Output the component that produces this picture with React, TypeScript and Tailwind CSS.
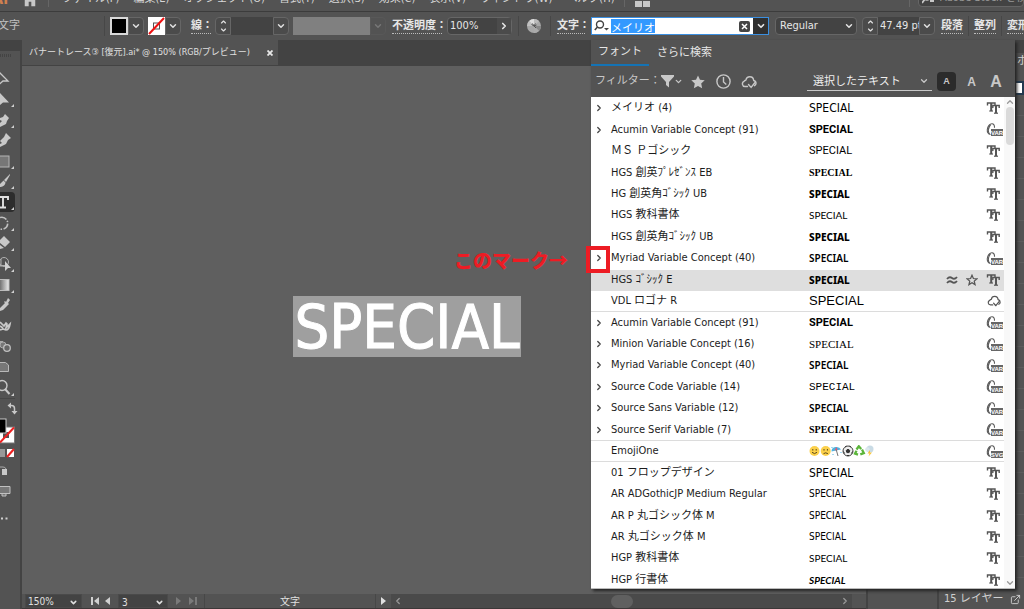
import React from "react";
import clsx from "clsx";
import { ChevronDown, ChevronLeft, ChevronRight, ChevronUp, ExternalLink } from "lucide-react";

type FontKind = "tt" | "var" | "svg" | "cloud";

interface FontRow {
    name: string;
    kind: FontKind;
    sample: string;
    expand?: boolean;
    selected?: boolean;
    line?: boolean;
    emoji?: boolean;
}

const condensed = "font-['DejaVu_Sans_Condensed','Noto_Sans_CJK_JP',sans-serif]";
const sans = "font-['Liberation_Sans',sans-serif]";
const noto = "font-['Noto_Sans','Noto_Sans_CJK_JP',sans-serif]";
const roboto = "font-['Roboto',sans-serif]";
const lato = "font-['Lato',sans-serif]";
const serif = "font-['Liberation_Serif',serif]";

const fonts: FontRow[] = [
    { name: "メイリオ (4)", kind: "tt", sample: clsx("text-[12px]", condensed), expand: true },
    { name: "Acumin Variable Concept (91)", kind: "var", sample: clsx("text-[11px] font-bold", roboto), expand: true },
    { name: "ＭＳ Ｐゴシック", kind: "tt", sample: clsx("text-[11px]", roboto) },
    { name: "HGS 創英ﾌﾟﾚｾﾞﾝｽ EB", kind: "tt", sample: clsx("text-[10px] font-bold", serif) },
    { name: "HG 創英角ｺﾞｼｯｸ UB", kind: "tt", sample: clsx("text-[10px] font-extrabold", noto) },
    { name: "HGS 教科書体", kind: "tt", sample: clsx("text-[10px]", lato) },
    { name: "HGS 創英角ｺﾞｼｯｸ UB", kind: "tt", sample: clsx("text-[10px] font-extrabold", noto) },
    { name: "Myriad Variable Concept (40)", kind: "var", sample: clsx("text-[10px] font-semibold", noto), expand: true },
    { name: "HGS ｺﾞｼｯｸ E", kind: "tt", sample: clsx("text-[10px] font-extrabold", noto), selected: true },
    { name: "VDL ロゴナ R", kind: "cloud", sample: clsx("text-[13px]", sans), line: true },
    { name: "Acumin Variable Concept (91)", kind: "var", sample: clsx("text-[11px] font-bold", roboto), expand: true },
    { name: "Minion Variable Concept (16)", kind: "var", sample: clsx("text-[11px]", serif), expand: true },
    { name: "Myriad Variable Concept (40)", kind: "var", sample: clsx("text-[10px] font-semibold", noto), expand: true },
    { name: "Source Code Variable (14)", kind: "var", sample: "text-[11px] font-['Liberation_Mono',monospace]", expand: true },
    { name: "Source Sans Variable (12)", kind: "var", sample: clsx("text-[10px] font-semibold", noto), expand: true },
    { name: "Source Serif Variable (7)", kind: "var", sample: clsx("text-[10px] font-bold", serif), expand: true, line: true },
    { name: "EmojiOne", kind: "svg", sample: "", emoji: true, line: true },
    { name: "01 フロップデザイン", kind: "tt", sample: clsx("text-[12px]", condensed) },
    { name: "AR ADGothicJP Medium Regular", kind: "tt", sample: clsx("text-[10px]", condensed) },
    { name: "AR P 丸ゴシック体 M", kind: "tt", sample: clsx("text-[10px]", condensed) },
    { name: "AR 丸ゴシック体 M", kind: "tt", sample: clsx("text-[10px]", condensed) },
    { name: "HGP 教科書体", kind: "tt", sample: clsx("text-[10px]", lato) },
    { name: "HGP 行書体", kind: "tt", sample: clsx("text-[10px] font-bold italic", lato) },
];

const menus = ["ファイル(F)", "編集(E)", "オブジェクト(O)", "書式(T)", "選択(S)", "効果(C)", "表示(V)", "ウィンドウ(W)", "ヘルプ(H)"];

function CloudIcon({ size }: { size: number }) {
    return (
        <svg width={size} height={size} viewBox="0 0 16 16" fill="none" stroke="currentColor" strokeWidth="1.4" strokeLinejoin="round" strokeLinecap="round">
            <path d="M6.5 12.5H4a2.7 2.7 0 0 1-.9-5.2C3.600 6.200 4.600 6.300 4.900 6.200 5.300 3.900 7 2.800 8.800 2.800c2.200 0 3.700 1.600 3.900 3.700 1.500.4 2.300 1.500 2.300 2.800 0 1-.6 1.900-1.500 2.400" />
            <path d="M7.500 10.500l2.600 2.900 3.700-4.700" />
        </svg>
    );
}

function KindIcon({ kind }: { kind: FontKind }) {
    if (kind === "cloud") return <CloudIcon size={14} />;
    if (kind === "tt") {
        return (
            <svg width="16" height="14" viewBox="0 0 16 14" fill="none" stroke="#555">
                <path d="M1.500 4.500V2h7.500v2.500" strokeWidth="1.400" />
                <path d="M5.200 2v8" strokeWidth="2" />
                <path d="M3.300 10h3.700" strokeWidth="1.200" />
                <path d="M6.800 7V4.500h6.400V7" strokeWidth="1.400" />
                <path d="M10 4.500v7.500" strokeWidth="2" />
                <path d="M8 12.200h4" strokeWidth="1.200" />
            </svg>
        );
    }
    return (
        <svg width="17" height="15" viewBox="0 0 17 15">
            <path d="M4.500 12.500C2.500 12.300 1 10.500 1.300 7.500 1.600 4.300 3.800 1.600 6 1.700c1.700.1 2.600 1.900 2.500 4.100" fill="none" stroke="#5a5a5a" strokeWidth="1.100" />
            <path d="M3.400 12C2 10 2 6 4.500 2.500" fill="none" stroke="#5a5a5a" strokeWidth="1.300" />
            <rect x="5" y="7" width="12" height="7" fill="#666" />
            <text x="11" y="13" textAnchor="middle" fontSize="6" fontWeight="bold" fill="#fff" fontFamily="Liberation Sans, sans-serif">
                {kind === "var" ? "VAR" : "SVG"}
            </text>
        </svg>
    );
}

function EmojiSample() {
    return (
        <svg width="66" height="12" viewBox="0 0 66 12">
            <circle cx="5.500" cy="6" r="5" fill="#fbd04b" />
            <path d="M3.800 4v1.600M7.200 4v1.600M3 7.300q2.500 2.600 5 0" stroke="#5c4a1c" fill="none" />
            <circle cx="16.700" cy="6" r="5" fill="#fbd04b" />
            <path d="M15 4v1.600M18.400 4v1.600M14.500 8.700q2.200-1.800 4.400 0" stroke="#5c4a1c" fill="none" />
            <path d="M22.500 6.500a5 4.500 0 0 1 9.500-2z" fill="#4fb3e0" />
            <path d="M25.500 5.500l2-3.500 1 3z" fill="#e05a70" />
            <path d="M27.300 5l1.700 6" stroke="#777" />
            <path d="M23 2v1M32 7v1M24 9v1" stroke="#4fb3e0" />
            <circle cx="39" cy="6" r="5" fill="#eee" stroke="#444" />
            <path d="M39 4.200l1.800 1.300-.7 2.100h-2.200l-.7-2.100zM36 2l1.500-.8M40.500 1.200l1.500.8M34.500 6.500l1 2M43.500 6.500l-1 2M38 10.500h2" fill="#333" stroke="#333" />
            <path d="M47.500 4.500l2.300-3.200 2.400 2.700M53 4.500l1.800 3.500-3.500 1.300M49 9.700l-3-1 1.500-3" fill="none" stroke="#5bb53a" strokeWidth="2.300" />
            <circle cx="61" cy="4" r="3.500" fill="#c9dbe5" />
            <circle cx="58.500" cy="4.500" r="2.300" fill="#dce8ee" />
            <path d="M61 5l-2.500 3.500h2L59.500 11.500 63 7.500h-2z" fill="#f7c53c" />
        </svg>
    );
}

function FontItem({ font }: { font: FontRow }) {
    return (
        <li
            className={clsx(
                "flex min-h-0 flex-1 items-center border-b pr-px",
                font.line ? "border-[#dcdcdc]" : "border-transparent",
                font.selected && "bg-[#dedede]"
            )}
        >
            <span className="flex w-[20px] pl-[3px]">
                {font.expand && (
                    <button type="button" aria-label={`${font.name} を展開`}>
                        <ChevronRight size={10} strokeWidth={3} color="#444" />
                    </button>
                )}
            </span>
            <span className="w-[198px] whitespace-nowrap text-[11px] leading-4 text-[#1c1c1c]">{font.name}</span>
            <span className={clsx("flex-1 leading-4 text-black", font.sample)}>{font.emoji ? <EmojiSample /> : "SPECIAL"}</span>
            {font.selected && (
                <span className="flex items-center gap-2 pr-2 text-[#555]">
                    <svg width="12" height="10" viewBox="0 0 12 10" fill="none" stroke="currentColor" strokeWidth="1.800">
                        <path d="M1 4Q3.500 1 6 3t5-1M1 8Q3.500 5 6 7t5-1" />
                    </svg>
                    <svg width="12" height="12" viewBox="0 0 24 24" fill="none" stroke="currentColor" strokeWidth="2.500">
                        <path d="M12 2.500l2.800 6.500 7 .6-5.300 4.700 1.600 7L12 17.500l-6.100 3.800 1.600-7L2.200 9.600l7-.6z" />
                    </svg>
                </span>
            )}
            <span className={clsx("flex w-[17px] text-[#555]", font.kind === "cloud" && "pl-px")}>
                <KindIcon kind={font.kind} />
            </span>
        </li>
    );
}

function FontMenu() {
    return (
        <div className="absolute left-0 top-full z-20 mt-[5px] w-[424px] border-b border-[#bbb] bg-[#535353] shadow-[2px_2px_3px_#222]">
            <div className="flex h-[26px] text-[11px] text-[#e6e6e6]">
                <button type="button" className="w-[58px] border-b-2 border-[#1473b5]">フォント</button>
                <button type="button" className="ml-2">さらに検索</button>
            </div>
            <div className="flex h-[31px] items-center pl-[4px] pr-[10px] text-[#c8c8c8]">
                <span className="w-[66px] whitespace-nowrap text-[11px]">フィルター：</span>
                <button type="button" aria-label="分類" className="flex w-[30px] items-center">
                    <svg width="13" height="13" viewBox="0 0 13 13" fill="currentColor"><path d="M0 0h13v1.500L8 7v5.500L5 10V7L0 1.500z" /></svg>
                    <ChevronDown size={9} strokeWidth={3.5} />
                </button>
                <button type="button" aria-label="お気に入り" className="w-[25px]">
                    <svg width="14" height="14" viewBox="0 0 24 24" fill="currentColor"><path d="M12 .8l3.400 7.500 8.100.9-6 5.500 1.600 8.100-7.100-4-7.100 4 1.600-8.100-6-5.500 8.100-.9z" /></svg>
                </button>
                <button type="button" aria-label="最近使用" className="w-[25px]">
                    <svg width="15" height="15" viewBox="0 0 15 15" fill="none" stroke="currentColor" strokeWidth="1.400"><circle cx="7.500" cy="7.500" r="6.600" /><path d="M7.500 3v5l2.800 2.500" /></svg>
                </button>
                <button type="button" aria-label="アクティベート済み"><CloudIcon size={16} /></button>
                <label className="relative ml-auto flex w-[125px] items-center border-b border-[#c8c8c8]">
                    <select aria-label="サンプルテキスト" className="w-full appearance-none pl-[6px] text-[11px] leading-[17px] text-[#f0f0f0] outline-none">
                        <option>選択したテキスト</option>
                    </select>
                    <ChevronDown size={10} strokeWidth={3} className="absolute right-[3px]" />
                </label>
                <div className="ml-[5px] flex items-center font-['Liberation_Sans',sans-serif] font-bold">
                    <button type="button" className="h-[19px] w-[19px] rounded-sm bg-[#2b2b2b] text-[9px]">A</button>
                    <button type="button" className="w-[31px] text-[12px]">A</button>
                    <button type="button" className="w-[18px] text-[16px]">A</button>
                </div>
            </div>
            <div className="flex h-[491px] overflow-hidden bg-white">
                <ul className="flex h-[494px] min-w-0 flex-1 flex-col pt-px">
                    {fonts.map((f, i) => <FontItem key={i} font={f} />)}
                </ul>
                <div className="flex w-[11px] flex-col items-center bg-[#f8f8f8] text-[#999]">
                    <ChevronUp size={10} strokeWidth={3} />
                    <div className="h-[38px] w-[8px] rounded-sm bg-[#dadada]" />
                    <ChevronDown size={10} strokeWidth={3} className="mt-auto" />
                </div>
            </div>
            <span className="pointer-events-none absolute -left-[5px] top-[206px] h-[27px] w-6 border-4 border-[#ed1c24]" />
        </div>
    );
}

function Drop({ dim }: { dim?: boolean }) {
    return (
        <button type="button" aria-label="開く" className={clsx("flex h-[18px] w-[16px] shrink-0 items-center justify-center rounded-r-sm border", dim ? "border-[#585858] text-[#777]" : "border-[#666] bg-[#4b4b4b] text-[#e0e0e0]")}>
            <ChevronDown size={10} strokeWidth={3.5} />
        </button>
    );
}

function Stepper({ label }: { label: string }) {
    return (
        <button type="button" aria-label={label} className="flex h-[18px] w-[16px] shrink-0 flex-col items-center justify-center rounded-l-sm border border-[#666] bg-[#4b4b4b] text-[#e0e0e0]">
            <ChevronUp size={9} strokeWidth={3.5} />
            <ChevronDown size={9} strokeWidth={3.5} />
        </button>
    );
}

const linkLabel = "shrink-0 whitespace-nowrap border-b border-dotted border-[#bbb] text-[11px] font-bold leading-[14px] text-[#e6e6e6]";

function ControlBar() {
    return (
        <div className="flex h-[29px] shrink-0 items-center border-t border-[#3c3c3c] bg-[#535353] text-[11px] text-[#e6e6e6]">
            <span className="-ml-[2px] w-[106px] shrink-0 text-[#c0c0c0]">文字</span>
            <span className="mr-[5px] h-5 w-px shrink-0 bg-[#474747]" />
            <button type="button" aria-label="塗り" className="h-[18px] w-[18px] shrink-0 border-2 border-[#d8d8d8] bg-black" />
            <Drop />
            <button type="button" aria-label="線の色" className="ml-[4px] shrink-0">
                <svg width="17" height="18" viewBox="0 0 17 18">
                    <rect width="17" height="18" fill="#fff" />
                    <rect x="5.500" y="6" width="6" height="6" fill="none" stroke="#555" />
                    <path d="M1 17L16 1" stroke="#ee1111" strokeWidth="2" />
                </svg>
            </button>
            <Drop />
            <label htmlFor="stroke" className={clsx(linkLabel, "ml-[10px] w-[20px]")}>線：</label>
            <div className="ml-[4px] flex shrink-0">
                <Stepper label="線幅" />
                <input id="stroke" className="w-[42px] bg-[#434343] outline-none" />
                <Drop />
            </div>
            <div className="ml-[4px] h-[18px] w-[77px] shrink-0 bg-[#808080]" />
            <Drop dim />
            <label htmlFor="opacity" className={clsx(linkLabel, "ml-[6px] w-[50px]")}>不透明度：</label>
            <div className="ml-[5px] flex h-[18px] w-[65px] shrink-0 rounded-sm border border-[#666] bg-[#434343]">
                <input id="opacity" defaultValue="100%" className="w-[49px] pl-[2px] pt-px outline-none" />
                <button type="button" aria-label="不透明度を開く" className="flex w-[15px] items-center justify-center bg-[#4b4b4b]"><ChevronRight size={10} strokeWidth={4} /></button>
            </div>
            <span className="ml-[6px] h-5 w-px shrink-0 bg-[#474747]" />
            <button type="button" aria-label="オブジェクトを再配色" className="ml-[8px] shrink-0">
                <svg width="14" height="14" viewBox="0 0 14 14">
                    <circle cx="7" cy="7" r="7" fill="#a8a8a8" />
                    <path d="M7 7L2 2A7 7 0 0 1 7 0z" fill="#ddd" />
                    <path d="M7 7V0a7 7 0 0 1 5 2z" fill="#bbb" />
                    <path d="M7 7l7 0a7 7 0 0 1-2 5z" fill="#888" />
                    <path d="M7 7l5 5a7 7 0 0 1-5 2z" fill="#aaa" />
                    <path d="M7 7H0a7 7 0 0 1 2-5z" fill="#c0c0c0" />
                    <path d="M4.500 5.500L7 7 5.500 4.500M8.500 4.500L7 7l2.500-1M7 7l2 2" stroke="#555" fill="none" />
                </svg>
            </button>
            <span className="ml-[9px] h-5 w-px shrink-0 bg-[#474747]" />
            <label htmlFor="font" className={clsx(linkLabel, "ml-[6px] w-[28px]")}>文字：</label>
            <div className="relative ml-[6px] shrink-0">
                <div className="flex h-[18px] w-[178px] items-center border border-[#3b8fe0] bg-white">
                    <svg width="15" height="12" viewBox="0 0 15 12" className="ml-[2px] shrink-0" fill="none" stroke="#444">
                        <circle cx="6" cy="4.500" r="3.500" strokeWidth="1.400" />
                        <path d="M3.500 7L.8 10" strokeWidth="1.600" />
                        <path d="M10 8h5l-2.500 2.500z" fill="#444" stroke="none" />
                    </svg>
                    <div className="ml-[2px] flex min-w-0 flex-1">
                        <input id="font" defaultValue="メイリオ" className="h-[14px] w-[44px] bg-[#3399ff] pt-px text-[11px] leading-none text-white outline-none" />
                    </div>
                    <button type="button" aria-label="クリア" className="mr-[3px] flex h-[11px] w-[11px] items-center justify-center rounded-xs bg-[#444]">
                        <svg width="7" height="7" viewBox="0 0 7 7" stroke="#fff" strokeWidth="1.500"><path d="M1 1l5 5M6 1L1 6" /></svg>
                    </button>
                    <button type="button" aria-label="フォント一覧" className="flex h-full w-[15px] items-center justify-center bg-[#303030]"><ChevronDown size={10} strokeWidth={4} /></button>
                </div>
                <FontMenu />
            </div>
            <div className="relative ml-[6px] flex h-[18px] w-[82px] shrink-0 items-center rounded-sm border border-[#666] bg-[#434343]">
                <select aria-label="フォントスタイル" className="w-full appearance-none pl-[4px] pt-px outline-none"><option>Regular</option></select>
                <ChevronDown size={10} strokeWidth={3.5} className="absolute right-[2px]" />
            </div>
            <div className="ml-[5px] flex shrink-0">
                <Stepper label="サイズ" />
                <input aria-label="フォントサイズ" defaultValue="47.49 pt" className="w-[41px] bg-[#434343] pl-[2px] pt-px outline-none" />
                <Drop />
            </div>
            <a href="#" className={clsx(linkLabel, "ml-[6px]")}>段落</a>
            <span className="mx-[5px] h-5 w-px shrink-0 bg-[#474747]" />
            <a href="#" className={linkLabel}>整列</a>
            <span className="mx-[5px] h-5 w-px shrink-0 bg-[#474747]" />
            <a href="#" className={linkLabel}>変形</a>
        </div>
    );
}

// left half of every tool is outside of the window, so only x >= 0 is drawn
const tools: { name: string; icon: React.ReactNode; sub?: boolean; active?: boolean }[] = [
    { name: "選択", icon: <path d="M-1 4L8 13H3L-1 16.500z" fill="none" stroke="#c8c8c8" strokeWidth="1.300" /> },
    { name: "ダイレクト選択", icon: <path d="M0 4L9 13.500H3L0 16z" fill="#c8c8c8" />, sub: true },
    { name: "ペン", icon: <path d="M0 8l3-1 2-3 4 4-2 3-1 3-6 3v-4l2-2-2-1z" fill="#c8c8c8" />, sub: true },
    { name: "曲線", icon: <path d="M0 11l4-4 2-4 5 5-3 2-2 4-6 3v-3l2-1z" fill="#c8c8c8" /> },
    { name: "長方形", icon: <rect x="-4" y="5" width="13" height="11" fill="#777" stroke="#b5b5b5" />, sub: true },
    { name: "ブラシ", icon: <path d="M10 3L4 9l2 2 4-7zM3.500 9.500l2 2C5 15 2 16 0 16v-3z" fill="#c8c8c8" />, sub: true },
    { name: "文字", icon: <path d="M-3 7V5H8v3M3 5v10M0 15.500h6" fill="none" stroke="#e0e0e0" strokeWidth="1.900" />, sub: true, active: true },
    { name: "回転", icon: <path d="M0 4.500a6 6 0 1 1 0 11.500" fill="none" stroke="#c0c0c0" strokeWidth="1.600" strokeDasharray="7 1.500 1.500 1.500" />, sub: true },
    { name: "消しゴム", icon: <path d="M0 7l4-4 6 6-5 5-5-4zM0 12l4 3-4 1z" fill="#c8c8c8" />, sub: true },
    { name: "シェイプ形成", icon: <><circle cx="4" cy="8" r="4.500" fill="none" stroke="#b0b0b0" /><path d="M0 11.500h6M1 5v8" stroke="#b0b0b0" /><path d="M5 7l6 7H8l-3 3z" fill="#d0d0d0" /></>, sub: true },
    { name: "グラデーション", icon: <><defs><linearGradient id="gr"><stop offset="0" stopColor="#666" /><stop offset="1" stopColor="#eee" /></linearGradient></defs><rect x="-1" y="4.500" width="10" height="11" fill="url(#gr)" stroke="#bbb" /></>, sub: true },
    { name: "スポイト", icon: <path d="M8 3l2 2-2 3 1 1-1 1-5 5-3 1v-3l5-5-1-1 1-1 1 1z" fill="#c8c8c8" /> },
    { name: "ワープ", icon: <path d="M0 6l4 4 2-3 1 1-1 4 4-4q-1 6-4 6l-3-1-3 1M0 10l3 2" fill="none" stroke="#c8c8c8" strokeWidth="1.700" /> },
    { name: "ブレンド", icon: <><rect x="-2" y="5" width="5" height="5" fill="#aaa" /><circle cx="3" cy="9" r="3" fill="#777" stroke="#aaa" /><circle cx="7" cy="12" r="3.300" fill="#666" stroke="#c0c0c0" strokeWidth="1.300" /></> },
    { name: "アートボード", icon: <path d="M-1 5.500H5.500L8.500 8v6.500H-1z" fill="#777" stroke="#b8b8b8" /> },
    { name: "ズーム", icon: <><circle cx="2" cy="7.500" r="5" fill="none" stroke="#c8c8c8" strokeWidth="1.400" /><path d="M5 11l4.500 5" stroke="#c8c8c8" strokeWidth="2" /></>, sub: true },
];

function Toolbar() {
    return (
        <nav className="w-[22px] shrink-0 border-r-2 border-[#434343] bg-[#535353]">
            <div className="h-[11px] bg-[#434343]" />
            <div className="flex h-[17px] items-start pt-[3px]">
                <span className="h-[3px] w-[12px] bg-[repeating-linear-gradient(90deg,#444_0_1px,#535353_1px_2px)]" />
            </div>
            <div className="flex h-[330px] flex-col">
                {tools.map((t) => (
                    <button key={t.name} type="button" aria-label={t.name} className={clsx("min-h-0 w-[15px] flex-1 rounded-r-sm", t.active && "bg-[#2d2d2d]")}>
                        <svg width="15" height="20" viewBox="0 0 15 20">
                            {t.icon}
                            {t.sub && <path d="M14 15v3h-3z" fill="#d0d0d0" />}
                        </svg>
                    </button>
                ))}
            </div>
            <svg width="18" height="130" viewBox="0 0 18 130" fill="none">
                <path d="M0 .5h15" stroke="#474747" />
                <path d="M9 7.500h2.500q3 0 3 3V14" stroke="#c8c8c8" strokeWidth="1.500" />
                <path d="M7.500 7.500l3.500-3v6zM14.500 16.500l-3-3.500h6z" fill="#c8c8c8" />
                <rect x="-3" y="29" width="17.500" height="16" fill="#fff" stroke="#777" />
                <rect x="3" y="34" width="6" height="6" fill="#535353" />
                <path d="M0 44.500L14 29.500" stroke="#e22" strokeWidth="2" />
                <rect x="-5" y="21" width="11" height="14" fill="#000" stroke="#ccc" />
                <rect x="-1" y="51" width="6" height="8" fill="#999" />
                <rect x="7" y="51" width="7" height="8" fill="#fff" />
                <path d="M7 59l7-8" stroke="#e22" strokeWidth="2" />
                <path d="M0 69h3a3 3 0 0 1 3 2" stroke="#aaa" />
                <rect x="2" y="71" width="5" height="6" fill="#c8c8c8" />
                <path d="M-1 88.500h11v7h-11zM2 96v2h4v-2" fill="#777" stroke="#c0c0c0" />
                <path d="M1 120.500h2M5.500 120.500h2" stroke="#d0d0d0" strokeWidth="2" />
            </svg>
        </nav>
    );
}

function StatusBar() {
    return (
        <footer className="flex h-[15px] shrink-0 items-center overflow-hidden border-b border-[#3c3838] bg-[#535353] text-[10px] leading-none text-[#e0e0e0]">
            <div className="relative ml-[3px] flex h-full w-[57px] items-center border border-[#4a4a4a] bg-[#434343] pt-[2px]">
                <select aria-label="ズーム率" className="w-full appearance-none pl-[2px] outline-none"><option>150%</option></select>
                <ChevronDown size={9} strokeWidth={4} className="absolute right-[3px]" />
            </div>
            <div className="flex w-[36px] items-center justify-center gap-[6px]">
                <button type="button" aria-label="最初"><svg width="8" height="8" viewBox="0 0 8 8" fill="#d0d0d0"><path d="M0 0h2v8H0zM8 0v8L3 4z" /></svg></button>
                <button type="button" aria-label="前へ"><svg width="5" height="8" viewBox="0 0 5 8" fill="#d0d0d0"><path d="M5 0v8L0 4z" /></svg></button>
            </div>
            <div className="relative flex h-full w-[50px] items-center border border-[#4a4a4a] bg-[#434343] pt-[2px]">
                <input aria-label="アートボード番号" defaultValue="3" className="w-full pl-[3px] outline-none" />
                <ChevronDown size={9} strokeWidth={4} className="absolute right-[3px]" />
            </div>
            <div className="flex w-[36px] items-center justify-center gap-[8px]">
                <button type="button" aria-label="次へ"><svg width="5" height="8" viewBox="0 0 5 8" fill="#7a7a7a"><path d="M0 0v8l5-4z" /></svg></button>
                <button type="button" aria-label="最後"><svg width="8" height="8" viewBox="0 0 8 8" fill="#7a7a7a"><path d="M6 0h2v8H6zM0 0v8l5-4z" /></svg></button>
            </div>
            <div className="w-[172px] border-x border-[#474747] text-center leading-[15px]">文字</div>
            <button type="button" aria-label="表示" className="flex w-[15px] justify-center"><svg width="5" height="8" viewBox="0 0 5 8" fill="#e0e0e0"><path d="M0 0v8l5-4z" /></svg></button>
            <div className="flex h-full min-w-0 flex-1 items-center justify-between bg-[#4a4a4a] px-[2px] text-[#999]">
                <ChevronLeft size={10} strokeWidth={3} />
                <span className="h-[13px] w-[22px] rounded-full bg-[#606060]" />
                <ChevronRight size={10} strokeWidth={3} />
            </div>
            <span className="h-full w-[14px] bg-[#535353]" />
        </footer>
    );
}

export default function App() {
    return (
        <div className="flex h-screen flex-col overflow-hidden bg-[#535353] font-['DejaVu_Sans_Condensed','Noto_Sans_CJK_JP',sans-serif]">
            <header className="flex h-[11px] shrink-0 items-end overflow-hidden pb-[4px] text-[11px] leading-4 text-[#d8d8d8]">
                <span className="-ml-[8px] w-[31px] shrink-0 text-[16px] font-bold text-[#d08050]">Ai</span>
                <svg width="14" height="14" viewBox="0 0 16 14" className="shrink-0" fill="#c8c8c8"><path d="M8 0l8 7h-2v7H9.500V9h-3v5H2V7H0z" /></svg>
                <span className="ml-[11px] h-4 w-px shrink-0 bg-[#666]" />
                <nav className="ml-[13px] flex gap-[14px] whitespace-nowrap">
                    {menus.map((m) => <a key={m} href="#">{m}</a>)}
                </nav>
                <span className="ml-[9px] h-4 w-px shrink-0 bg-[#666]" />
                <svg width="15" height="6" viewBox="0 0 15 6" className="ml-[10px] shrink-0" fill="#c8c8c8"><path d="M0 0h7v6H0zM8 0h7v6H8z" /></svg>
                <span className="ml-auto h-4 w-px shrink-0 bg-[#666]" />
                <label className="ml-[8px] flex w-[106px] shrink-0 items-center gap-[6px] overflow-hidden rounded-sm border border-[#666] bg-[#434343] pl-[3px]">
                    <svg width="12" height="12" viewBox="0 0 12 12" className="shrink-0" fill="none" stroke="#c8c8c8"><circle cx="5" cy="4.500" r="3.500" strokeWidth="1.500" /><path d="M3 7L0 11M8 9h4" strokeWidth="1.800" /></svg>
                    <input aria-label="検索" placeholder="Adobe Stock を検索" className="w-[120px] shrink-0 text-[11px] outline-none placeholder:text-[#999]" />
                </label>
            </header>
            <ControlBar />
            <div className="flex min-h-0 flex-1">
                <Toolbar />
                <main className="flex min-w-0 flex-1 flex-col">
                    <div className="flex h-[26px] shrink-0 border-b border-[#434343] bg-[#434343]">
                        <div className="flex w-[256px] items-center justify-between bg-[#535353] pl-[7px] pr-[5px] text-[9px] text-[#e0e0e0]">
                            <span className="whitespace-nowrap">バナートレース③ [復元].ai* @ 150% (RGB/プレビュー)</span>
                            <button type="button" aria-label="閉じる"><svg width="6" height="6" viewBox="0 0 6 6" stroke="#e8e8e8" strokeWidth="1.800"><path d="M.5.5l5 5M5.500.5l-5 5" /></svg></button>
                        </div>
                    </div>
                    <div className="relative min-h-0 flex-1 overflow-hidden bg-[#5f5f5f]">
                        <p className="absolute left-[432px] top-[180px] whitespace-nowrap text-[19px] font-black leading-7 text-[#ed1c24] font-['Noto_Sans_CJK_JP',sans-serif]">このマーク→</p>
                        <p className="absolute left-[271px] top-[230px] h-[61px] w-[228px] bg-[#9f9f9f] text-center text-[61px] leading-[61px] text-white [-webkit-text-stroke:1px_white] font-['DejaVu_Sans_Condensed',sans-serif]">SPECIAL</p>
                    </div>
                    <StatusBar />
                </main>
                <div className="w-[73px] shrink-0 border-x-2 border-[#434343]" />
                <aside className="flex w-[85px] shrink-0 flex-col text-[#d0d0d0]">
                    <div className="h-[13px] bg-[#434343]" />
                    <div className="h-[28px] text-right text-[11px]"><span className="-mr-1">ポ</span></div>
                    <div className="ml-auto h-[14px] w-[8px] border-2 border-l-0 border-[#243a50] bg-white" />
                    <div className="flex-1 bg-[repeating-linear-gradient(#535353_0_20px,#5c5c5c_20px_21px)]" />
                    <div className="flex h-[20px] items-center justify-between pl-[5px] pr-[3px] text-[11px]">
                        <span>15 レイヤー</span>
                        <ExternalLink size={11} />
                    </div>
                </aside>
            </div>
        </div>
    );
}
